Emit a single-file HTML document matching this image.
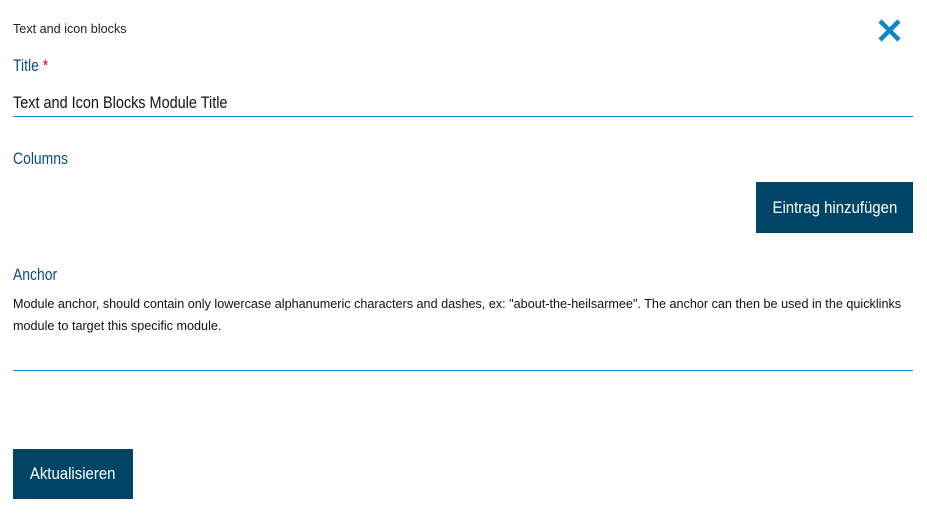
<!DOCTYPE html>
<html><head><meta charset="utf-8"><style>
body{margin:0;width:927px;height:514px;background:#fff;position:relative;font-family:"Liberation Sans Narrow","Liberation Sans",sans-serif;overflow:hidden}
.a{position:absolute;white-space:nowrap;transform-origin:0 0}
.lbl{color:#0d4f78;font-size:17px;transform:scaleX(0.82)}
.line{position:absolute;left:13px;width:900px;height:1px;background:#0a8ccc}
.btn{position:absolute;background:#004466;color:#fff;font-size:17px;display:flex;align-items:center;justify-content:center}
.btn span{display:inline-block;transform:scaleX(0.88)}
</style></head><body>
<div class="a" style="left:13px;top:21px;font-size:13px;color:#222;transform:scaleX(0.97)">Text and icon blocks</div>
<svg class="a" style="left:878px;top:19px" width="23" height="23" viewBox="0 0 23 23"><path d="M2 2L21 21M21 2L2 21" stroke="#0a88c6" stroke-width="4.5"/></svg>
<div class="a lbl" style="left:13px;top:56px">Title <span style="color:#e00">*</span></div>
<div class="a" style="left:13px;top:93px;font-size:17px;color:#111;transform:scaleX(0.85)">Text and Icon Blocks Module Title</div>
<div class="line" style="top:116px"></div>
<div class="a lbl" style="left:13px;top:149px">Columns</div>
<div class="btn" style="left:756px;top:182px;width:157px;height:51px"><span>Eintrag hinzufügen</span></div>
<div class="a lbl" style="left:13px;top:265px">Anchor</div>
<div class="a" style="left:13px;top:293px;font-size:12.5px;color:#111;line-height:22px;white-space:normal;width:895px;transform:scaleX(1.01)">Module anchor, should contain only lowercase alphanumeric characters and dashes, ex: "about-the-heilsarmee". The anchor can then be used in the quicklinks module to target this specific module.</div>
<div class="line" style="top:370px"></div>
<div class="btn" style="left:13px;top:449px;width:120px;height:50px"><span>Aktualisieren</span></div>
</body></html>
